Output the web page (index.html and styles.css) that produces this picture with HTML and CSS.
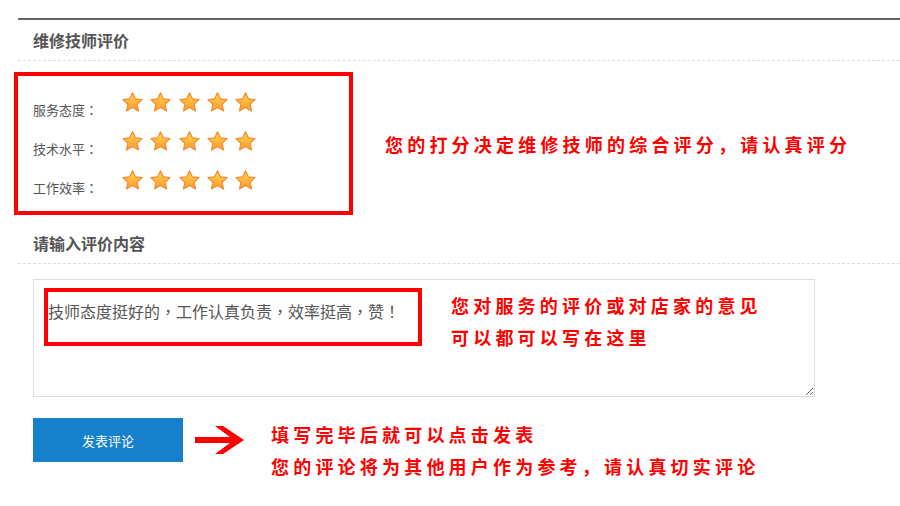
FILE: index.html
```html
<!DOCTYPE html>
<html>
<head>
  <meta charset="utf-8">
  <title>维修技师评价</title>
  <link rel="stylesheet" href="styles.css">
</head>
<body>
  <svg class="defs" width="0" height="0">
    <defs>
      <linearGradient id="starFill" x1="0" y1="0" x2="0" y2="1">
        <stop offset="0" stop-color="#ffd64f"/>
        <stop offset="1" stop-color="#ff9830"/>
      </linearGradient>
      <symbol id="star" viewBox="0 0 24 24">
        <polygon points="12,1.8 15,8.2 22,9 16.8,13.8 18.3,20.8 12,17.2 5.7,20.8 7.2,13.8 2,9 9,8.2" fill="url(#starFill)" stroke="#f28b2e" stroke-width="1.2" stroke-linejoin="round"/>
      </symbol>
    </defs>
  </svg>

  <div class="page">
    <div class="panel">
      <h2 class="section-title">维修技师评价</h2>
      <div class="rating">
        <div class="rate-row">
          <span class="rate-label">服务态度：</span>
          <span class="stars">
            <svg><use href="#star"/></svg><svg><use href="#star"/></svg><svg><use href="#star"/></svg><svg><use href="#star"/></svg><svg><use href="#star"/></svg>
          </span>
        </div>
        <div class="rate-row">
          <span class="rate-label">技术水平：</span>
          <span class="stars">
            <svg><use href="#star"/></svg><svg><use href="#star"/></svg><svg><use href="#star"/></svg><svg><use href="#star"/></svg><svg><use href="#star"/></svg>
          </span>
        </div>
        <div class="rate-row">
          <span class="rate-label">工作效率：</span>
          <span class="stars">
            <svg><use href="#star"/></svg><svg><use href="#star"/></svg><svg><use href="#star"/></svg><svg><use href="#star"/></svg><svg><use href="#star"/></svg>
          </span>
        </div>
      </div>

      <h2 class="section-title">请输入评价内容</h2>
      <textarea class="comment">技师态度挺好的，工作认真负责，效率挺高，赞！</textarea>
      <button class="submit">发表评论</button>
    </div>

    <!-- annotations drawn over the form -->
    <div class="mark mark-rating"></div>
    <p class="note note-rating">您的打分决定维修技师的综合评分，请认真评分</p>

    <div class="mark mark-comment"></div>
    <p class="note note-comment">您对服务的评价或对店家的意见<br>可以都可以写在这里</p>

    <svg class="arrow" width="54" height="30" viewBox="0 0 54 30">
      <rect x="2" y="12" width="40" height="6" fill="#f00"/>
      <polygon points="22,1 30,1 51,15 30,29 22,29 41,15" fill="#f00"/>
    </svg>
    <p class="note note-submit">填写完毕后就可以点击发表<br>您的评论将为其他用户作为参考，请认真切实评论</p>
  </div>
</body>
</html>
```

FILE: styles.css
```css
body {
  margin: 0;
  background: #fff;
  color: #555;
  font-family: "Noto Sans CJK SC", "Liberation Sans", sans-serif;
}

.defs {
  position: absolute;
}

.page {
  position: relative;
  width: 900px;
  height: 506px;
  overflow: hidden;
}

.panel {
  margin: 18px 0 0 18px;
  border-top: 2px solid #666;
}

.section-title {
  margin: 0;
  height: 40px;
  line-height: 40px;
  padding-left: 15px;
  font-size: 16px;
  font-weight: bold;
  color: #555;
  border-bottom: 1px dashed #ddd;
}

.rating {
  padding: 30px 0 15px 15px;
}

.rate-row {
  display: flex;
  height: 39px;
}

.rate-label {
  width: 88px;
  margin-top: 11px;
  font-family: "Noto Sans CJK TC", "Noto Sans CJK SC", sans-serif;
  font-size: 13px;
  line-height: 16px;
  color: #555;
}

.stars {
  display: flex;
  gap: 5.3px;
}

.stars svg {
  width: 23px;
  height: 23px;
}

.comment {
  display: block;
  box-sizing: border-box;
  width: 782px;
  height: 118px;
  margin: 15px 0 0 15px;
  padding: 19px 14px;
  border: 1px solid #ddd;
  font-family: "Noto Sans CJK TC", "Noto Sans CJK SC", sans-serif;
  font-size: 16px;
  line-height: 24px;
  color: #555;
  outline: none;
}

.submit {
  display: block;
  width: 150px;
  height: 44px;
  margin: 21px 0 0 15px;
  border: 0;
  background: #1680cc;
  color: #fff;
  font-family: "Noto Sans CJK SC", sans-serif;
  font-size: 13px;
}

.mark {
  position: absolute;
  box-sizing: border-box;
  border: 4px solid #f00;
}

.mark-rating {
  left: 14px;
  top: 72px;
  width: 339px;
  height: 143px;
}

.mark-comment {
  left: 44px;
  top: 288px;
  width: 378px;
  height: 58px;
}

.note {
  position: absolute;
  margin: 0;
  color: #f00;
  font-size: 18px;
  font-weight: bold;
  letter-spacing: 4.2px;
  line-height: 32px;
  white-space: nowrap;
}

.note-rating {
  left: 385px;
  top: 128px;
}

.note-comment {
  left: 451px;
  top: 289px;
}

.note-submit {
  left: 271px;
  top: 418px;
}

.arrow {
  position: absolute;
  left: 193px;
  top: 425px;
}
```
